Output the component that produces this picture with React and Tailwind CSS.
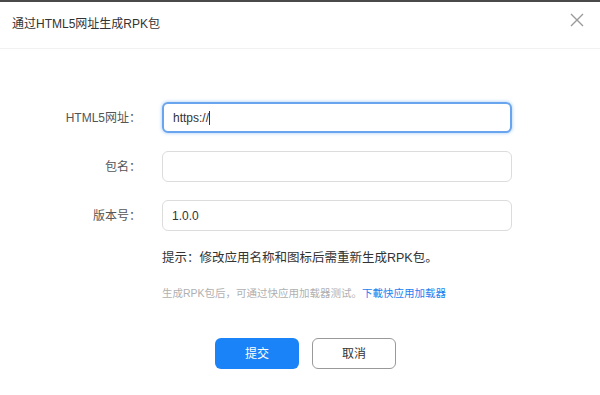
import React from 'react';

const font = { fontFamily: '"Liberation Sans", "Noto Sans CJK SC", sans-serif' };

const Field = ({ label, children, focused }) => (
    <div className="flex items-center">
        <div className="w-[141px] text-right text-[12px] text-[#555]">{label}</div>
        <div
            className={
                'ml-[21px] w-[350px] h-[31px] rounded-[6px] bg-white flex items-center px-[9px] text-[12px] text-[#333] ' +
                (focused
                    ? 'border-2 border-[#69a4ee] shadow-[0_0_3px_1px_rgba(90,160,240,0.35)] px-[8px]'
                    : 'border border-[#dcdcdc]')
            }
        >
            {children}
        </div>
    </div>
);

const App = () => {
    return (
        <div className="w-[600px] h-[395px] bg-white border-t-2 border-[#4a4a4a] overflow-hidden" style={font}>
            {/* header */}
            <div className="h-[47px] flex items-start justify-between border-b border-[#f1f1f1] pl-[12px] pr-[16px]">
                <h1 className="pt-[12px] text-[12px] leading-[20px] text-[#333]">通过HTML5网址生成RPK包</h1>
                <svg className="mt-[11px]" width="14" height="14" viewBox="0 0 14 14" fill="none" stroke="#9a9a9a" strokeWidth="1.4">
                    <path d="M1 1 L13 13 M13 1 L1 13" />
                </svg>
            </div>

            {/* form */}
            <div className="pt-[53px] flex flex-col gap-[18px]">
                <Field label="HTML5网址：" focused>
                    <span>https://</span>
                    <span className="w-px h-[14px] bg-[#333]"></span>
                </Field>
                <Field label="包名：" />
                <Field label="版本号：">1.0.0</Field>
            </div>

            <div className="pl-[162px] mt-[18px]">
                <p className="text-[12.5px] leading-[18px] text-[#333]">提示：修改应用名称和图标后需重新生成RPK包。</p>
                <p className="mt-[18px] text-[10.5px] leading-[16px] text-[#b0b0b0]">
                    生成RPK包后，可通过快应用加载器测试。<span className="text-[#1c7ff0]">下載快应用加载器</span>
                </p>
            </div>

            <div className="pl-[215px] mt-[37px] flex gap-[13px]">
                <button className="w-[84px] h-[31px] rounded-[6px] bg-[#1a83f7] text-white text-[12px]">提交</button>
                <button className="w-[84px] h-[31px] rounded-[6px] border border-[#999] bg-white text-[#333] text-[12px]">取消</button>
            </div>
        </div>
    );
};

export default App;
